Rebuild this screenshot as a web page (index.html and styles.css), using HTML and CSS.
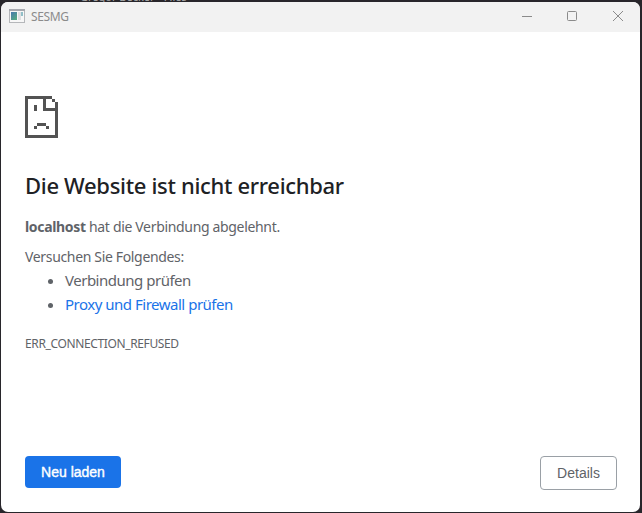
FILE: index.html
```html
<!DOCTYPE html>
<html lang="de">
<head>
<meta charset="utf-8">
<title>SESMG</title>
<link rel="stylesheet" href="styles.css">
</head>
<body>
<div class="backdrop">Gregor Becker - Files</div>
<div class="window">
  <header class="titlebar">
    <svg class="app-icon" width="16" height="14" viewBox="0 0 16 14">
      <defs><linearGradient id="pane" x1="0" y1="0" x2="0.7" y2="1"><stop offset="0" stop-color="#4779ae"/><stop offset="1" stop-color="#55a883"/></linearGradient></defs>
      <rect x=".5" y=".5" width="15" height="13" fill="#f7f7f7" stroke="#b5b7ba"/>
      <path d="M0 1h16" stroke="#a6a8ae" stroke-width="2"/>
      <rect x="2" y="3" width="6" height="8" fill="url(#pane)"/>
      <rect x="9" y="3" width="3" height="8" fill="#dedfe1"/>
      <rect x="12" y="3" width="2" height="4" fill="#91bfc8"/>
    </svg>
    <span class="title">SESMG</span>
    <svg class="controls" width="102" height="12" viewBox="0 0 102 12" fill="none" stroke="#8b8b8b">
      <path d="M0 6.500h10"/>
      <rect x="45.500" y="1.500" width="9" height="9" rx="1"/>
      <path d="M91 1l10 10M101 1l-10 10"/>
    </svg>
  </header>
  <main class="content">
    <svg class="sad-page" width="33" height="42" viewBox="0 0 11 14" fill="#535353" shape-rendering="crispEdges">
      <path d="M0 0h9v1H7v3h3V2h1v12H0zM1 1v12h9V5H6V1zM9 1h1v1H9zM3 3h1v2H3zM4 9h3v1h1v1H7v-1H4v1H3v-1h1z" fill-rule="evenodd"/>
    </svg>
    <h1>Die Website ist nicht erreichbar</h1>
    <p class="summary"><strong>localhost</strong> <span>hat die Verbindung abgelehnt.</span></p>
    <p class="try">Versuchen Sie Folgendes:</p>
    <ul>
      <li>Verbindung prüfen</li>
      <li><a>Proxy und Firewall prüfen</a></li>
    </ul>
    <div class="code">ERR_CONNECTION_REFUSED</div>
    <div class="buttons">
      <button class="reload">Neu laden</button>
      <button class="details">Details</button>
    </div>
  </main>
</div>
</body>
</html>
```
FILE: styles.css
```css
* { box-sizing: border-box; }
body {
  margin: 0;
  width: 642px;
  height: 513px;
  overflow: hidden;
  padding: 2px 2px 1px 1px;
  background: #28262b;
  font-family: "Noto Sans", "Open Sans", sans-serif;
  color: #5f6368;
}
.backdrop {
  position: absolute;
  left: 80px;
  top: -10px;
  font-size: 11px;
  line-height: 14px;
  color: #aaa;
  white-space: nowrap;
}
.window {
  position: relative;
  height: 510px;
  display: flex;
  flex-direction: column;
  background: #fff;
  border-radius: 7px;
  overflow: hidden;
}
.titlebar {
  height: 30px;
  flex: none;
  display: flex;
  align-items: center;
  padding: 0 16px 2px 8px;
  background: #f2f2f2;
}
.title {
  margin-left: 6px;
  font-size: 12px;
  letter-spacing: -0.4px;
  color: #8b8b8b;
}
.controls { margin-left: auto; }
.content {
  flex: 1;
  display: flex;
  flex-direction: column;
  padding: 64px 23px 22px 24px;
}
.sad-page { flex: none; display: block; }
h1 {
  margin: 31px 0 0;
  font-size: 22px;
  font-weight: 500;
  line-height: 32px;
  letter-spacing: -0.32px;
  color: #202124;
  white-space: nowrap;
}
p { margin: 0; font-size: 14px; line-height: 20px; white-space: nowrap; }
.summary { margin-top: 16px; letter-spacing: -0.33px; }
.try { margin-top: 10px; letter-spacing: -0.34px; }
ul {
  margin: 1px 0 0;
  padding-left: 40px;
  font-size: 15px;
  line-height: 24px;
  letter-spacing: -0.49px;
}
a { color: #1a73e8; }
.code {
  margin-top: 19px;
  font-size: 12px;
  line-height: 18px;
  letter-spacing: -0.37px;
}
.buttons {
  display: flex;
  justify-content: space-between;
  align-items: flex-start;
  margin-top: auto;
}
button {
  margin: 0;
  padding: 0;
  border-radius: 4px;
  font-family: "Liberation Sans", Arial, sans-serif;
  font-size: 14px;
  white-space: nowrap;
}
.reload {
  width: 96px;
  height: 32px;
  border: 0;
  background: #1a73e8;
  color: #fff;
  -webkit-text-stroke: 0.4px #fff;
}
.details {
  width: 77px;
  height: 34px;
  border: 1px solid #9aa0a6;
  background: #fff;
  color: #5f6368;
}
```
